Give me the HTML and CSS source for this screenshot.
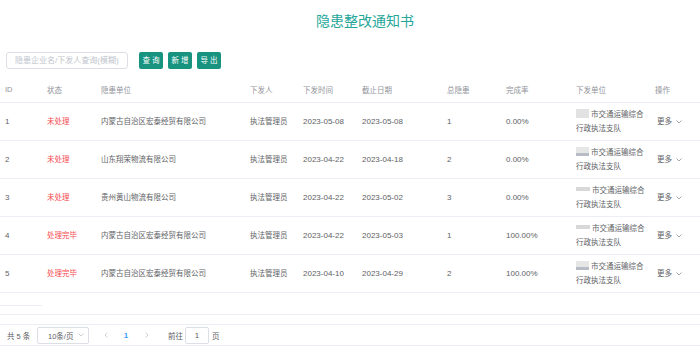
FILE: index.html
```html
<!DOCTYPE html>
<html lang="zh-CN">
<head>
<meta charset="utf-8">
<title>隐患整改通知书</title>
<link rel="stylesheet" href="styles.css">
</head>
<body>
<h1 class="title">隐患整改通知书</h1>
<div class="toolbar">
  <input class="search" type="text" placeholder="隐患企业名/下发人查询(模糊)">
  <button class="btn btn-first">查询</button>
  <button class="btn">新增</button>
  <button class="btn">导出</button>
</div>
<table class="grid">
  <colgroup>
    <col class="c-id"><col class="c-status"><col class="c-unit"><col class="c-by"><col class="c-date"><col class="c-due"><col class="c-total"><col class="c-rate"><col class="c-org"><col class="c-op">
  </colgroup>
  <thead>
    <tr><th>ID</th><th>状态</th><th>隐患单位</th><th>下发人</th><th>下发时间</th><th>截止日期</th><th>总隐患</th><th>完成率</th><th>下发单位</th><th>操作</th></tr>
  </thead>
  <tbody>
    <tr><td class="num">1</td><td class="st">未处理</td><td>内蒙古自治区宏泰经贸有限公司</td><td>执法管理员</td><td class="num">2023-05-08</td><td class="num">2023-05-08</td><td class="num">1</td><td class="num">0.00%</td><td class="org"><span class="redact"></span> 市交通运输综合<br>行政执法支队</td><td><span class="more">更多<svg class="chev" viewBox="0 0 6 4" width="6" height="4"><path d="M0.5 0.5 L3 3 L5.5 0.5" fill="none" stroke="#909399" stroke-width="0.8"/></svg></span></td></tr>
    <tr><td class="num">2</td><td class="st">未处理</td><td>山东翔荣物流有限公司</td><td>执法管理员</td><td class="num">2023-04-22</td><td class="num">2023-04-18</td><td class="num">2</td><td class="num">0.00%</td><td class="org"><span class="redact r2"></span> 市交通运输综合<br>行政执法支队</td><td><span class="more">更多<svg class="chev" viewBox="0 0 6 4" width="6" height="4"><path d="M0.5 0.5 L3 3 L5.5 0.5" fill="none" stroke="#909399" stroke-width="0.8"/></svg></span></td></tr>
    <tr><td class="num">3</td><td class="st">未处理</td><td>贵州黄山物流有限公司</td><td>执法管理员</td><td class="num">2023-04-22</td><td class="num">2023-05-02</td><td class="num">3</td><td class="num">0.00%</td><td class="org"><span class="redact r3"></span> 市交通运输综合<br>行政执法支队</td><td><span class="more">更多<svg class="chev" viewBox="0 0 6 4" width="6" height="4"><path d="M0.5 0.5 L3 3 L5.5 0.5" fill="none" stroke="#909399" stroke-width="0.8"/></svg></span></td></tr>
    <tr><td class="num">4</td><td class="st">处理完毕</td><td>内蒙古自治区宏泰经贸有限公司</td><td>执法管理员</td><td class="num">2023-04-22</td><td class="num">2023-05-03</td><td class="num">1</td><td class="num">100.00%</td><td class="org"><span class="redact r3"></span> 市交通运输综合<br>行政执法支队</td><td><span class="more">更多<svg class="chev" viewBox="0 0 6 4" width="6" height="4"><path d="M0.5 0.5 L3 3 L5.5 0.5" fill="none" stroke="#909399" stroke-width="0.8"/></svg></span></td></tr>
    <tr><td class="num">5</td><td class="st">处理完毕</td><td>内蒙古自治区宏泰经贸有限公司</td><td>执法管理员</td><td class="num">2023-04-10</td><td class="num">2023-04-29</td><td class="num">2</td><td class="num">100.00%</td><td class="org"><span class="redact r2"></span> 市交通运输综合<br>行政执法支队</td><td><span class="more">更多<svg class="chev" viewBox="0 0 6 4" width="6" height="4"><path d="M0.5 0.5 L3 3 L5.5 0.5" fill="none" stroke="#909399" stroke-width="0.8"/></svg></span></td></tr>
  </tbody>
</table>
<div class="table-end"><div class="stub"></div></div>
<div class="gap-line"></div>
<div class="pager">
  <span class="total">共 5 条</span>
  <span class="sizes">10条/页<svg class="chev2" viewBox="0 0 6 4" width="6" height="4"><path d="M0.5 0.5 L3 3 L5.5 0.5" fill="none" stroke="#c0c4cc" stroke-width="0.8"/></svg></span>
  <span class="arrow arrow-prev"><svg viewBox="0 0 4 6" width="4" height="6"><path d="M3.5 0.5 L1 3 L3.5 5.5" fill="none" stroke="#c0c4cc" stroke-width="0.8"/></svg></span>
  <span class="page">1</span>
  <span class="arrow arrow-next"><svg viewBox="0 0 4 6" width="4" height="6"><path d="M0.5 0.5 L3 3 L0.5 5.5" fill="none" stroke="#c0c4cc" stroke-width="0.8"/></svg></span>
  <span class="jump">前往</span>
  <span class="jump-box">1</span>
  <span class="jump-unit">页</span>
</div>
</body>
</html>
```
FILE: styles.css
```css
html, body {
  margin: 0;
  padding: 0;
  background: #fff;
}
body {
  font-family: "Liberation Sans", "Noto Sans CJK SC", sans-serif;
  font-size: 7.5px;
  color: #606266;
}
.title {
  margin: 0 0 0 30px;
  padding-top: 13px;
  height: 16px;
  line-height: 16px;
  font-size: 14px;
  font-weight: normal;
  text-align: center;
  color: #26a69a;
}
.toolbar {
  display: flex;
  align-items: center;
  margin-top: 23px;
  padding-left: 6px;
  height: 17px;
  gap: 5px;
}
.search {
  box-sizing: border-box;
  width: 122px;
  height: 17px;
  border: 1px solid #dcdfe6;
  border-radius: 3px;
  padding: 0 0 0 8px;
  font-family: inherit;
  font-size: 8px;
  color: #606266;
  outline: none;
}
.search::placeholder {
  color: #c0c4cc;
}
.btn {
  box-sizing: border-box;
  width: 24px;
  height: 17px;
  padding: 0 0 0 2px;
  border: none;
  border-radius: 2px;
  background: #17937f;
  color: #fff;
  font-family: inherit;
  font-size: 7.5px;
  letter-spacing: 2px;
  line-height: 17px;
}
.btn-first {
  margin-left: 6px;
}
.grid {
  margin-top: 8px;
  width: 700px;
  border-collapse: collapse;
  table-layout: fixed;
}
.c-id { width: 42px; }
.c-status { width: 54px; }
.c-unit { width: 149px; }
.c-by { width: 53px; }
.c-date { width: 59px; }
.c-due { width: 85px; }
.c-total { width: 59px; }
.c-rate { width: 70px; }
.c-org { width: 79px; }
.c-op { width: 50px; }
.grid th {
  height: 25px;
  padding: 0 0 0 5px;
  text-align: left;
  font-weight: normal;
  color: #909399;
  border-bottom: 1px solid #ebeef5;
  white-space: nowrap;
}
.grid td {
  height: 37px;
  padding: 0 0 0 5px;
  text-align: left;
  vertical-align: middle;
  border-bottom: 1px solid #ebeef5;
  white-space: nowrap;
  line-height: 14px;
}
.grid td.num {
  font-size: 8px;
}
.grid td.st {
  color: #f5484e;
}
.redact {
  display: inline-block;
  width: 13px;
  height: 9px;
  background: #e2e2e2;
  vertical-align: -1px;
}
.redact.r2 {
  background: linear-gradient(to bottom, #e6e6e6 0, #e6e6e6 70%, #b8bcc4 70%);
}
.redact.r3 {
  width: 14px;
  height: 4px;
  background: #d8d8d8;
  vertical-align: 2px;
}
.more {
  display: inline-flex;
  align-items: center;
  gap: 4px;
  padding-left: 2px;
}
.chev {
  display: block;
}
.table-end {
  box-sizing: border-box;
  height: 22px;
  padding-top: 12px;
  border-bottom: 1px solid #ebeef5;
}
.stub {
  width: 42px;
  height: 1px;
  background: #ebeef5;
}
.gap-line {
  height: 9px;
  border-bottom: 1px solid #ebeef5;
}
.pager {
  display: flex;
  align-items: center;
  height: 20px;
  border-bottom: 1px solid #ebeef5;
  padding-left: 7px;
  color: #606266;
}
.total {
  width: 30px;
}
.sizes {
  box-sizing: border-box;
  display: flex;
  align-items: center;
  justify-content: space-between;
  width: 52px;
  height: 17px;
  border: 1px solid #dcdfe6;
  border-radius: 2px;
  padding: 0 4px 0 10px;
}
.chev2 {
  display: block;
}
.arrow {
  display: flex;
  justify-content: center;
  width: 12px;
}
.arrow-prev {
  margin-left: 11px;
}
.page {
  width: 28px;
  text-align: center;
  color: #409eff;
  font-size: 8px;
  font-weight: bold;
}
.arrow-next {
  width: 14px;
}
.jump {
  margin-left: 14px;
}
.jump-box {
  box-sizing: border-box;
  width: 24px;
  height: 17px;
  border: 1px solid #dcdfe6;
  border-radius: 2px;
  margin-left: 2px;
  line-height: 15px;
  text-align: center;
  font-size: 8px;
}
.jump-unit {
  margin-left: 3px;
}
```
